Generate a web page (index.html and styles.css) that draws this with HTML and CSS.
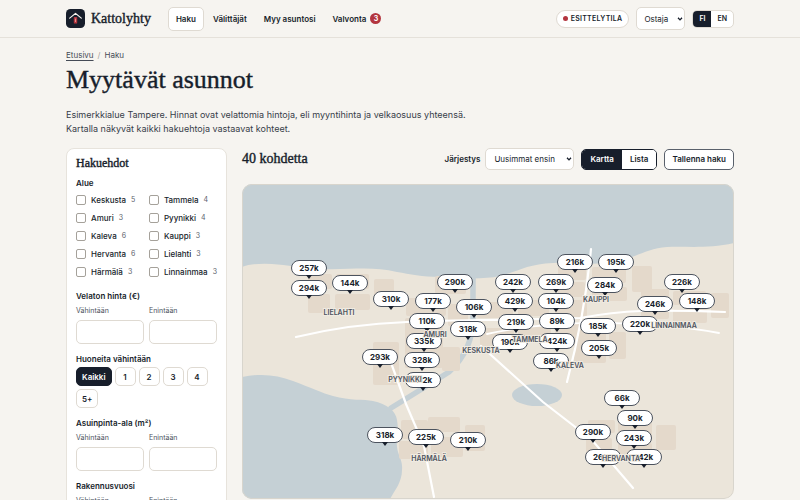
FILE: index.html
```html
<!DOCTYPE html>
<html lang="fi">
<head>
<meta charset="utf-8">
<meta name="viewport" content="width=device-width, initial-scale=1">
<title>Kattolyhty – Haku</title>
<link rel="stylesheet" href="styles.css">
</head>
<body>
<header class="topbar">
  <div class="wrap topbar-row">
    <a class="brand" href="#">
      <svg class="logo" viewBox="0 0 19 19" aria-hidden="true">
        <rect width="19" height="19" rx="4.5" fill="#171e2b"/>
        <path d="M3.7 9.1 9.5 4.4l5.8 4.7" fill="none" stroke="#f6f4f0" stroke-width="1.2" stroke-linecap="round" stroke-linejoin="round"/>
        <rect x="7.8" y="8.1" width="3.4" height="6.5" rx=".7" fill="#b3353f"/>
        <path d="M9.5 9.6v3.4" stroke="#e08d88" stroke-width="1"/>
      </svg>
      <span>Kattolyhty</span>
    </a>
    <nav class="nav">
      <a class="active" href="#">Haku</a>
      <a href="#">Välittäjät</a>
      <a href="#">Myy asuntosi</a>
      <a href="#">Valvonta <span class="count">3</span></a>
    </nav>
    <div class="tools">
      <span class="demo"><i></i>Esittelytila</span>
      <select class="select role" aria-label="Rooli"><option>Ostaja</option></select>
      <div class="langs"><button class="on" type="button">FI</button><button type="button">EN</button></div>
    </div>
  </div>
</header>
<main class="wrap">
  <nav class="crumbs"><a href="#">Etusivu</a><span class="sep">/</span><span>Haku</span></nav>
  <h1>Myytävät asunnot</h1>
  <p class="lead">Esimerkkialue Tampere. Hinnat ovat velattomia hintoja, eli myyntihinta ja velkaosuus yhteensä. Kartalla näkyvät kaikki hakuehtoja vastaavat kohteet.</p>
  <div class="layout">
    <form class="filters">
      <h2>Hakuehdot</h2>
      <fieldset>
        <legend>Alue</legend>
        <div class="areas">
          <label><input type="checkbox">Keskusta <small>5</small></label>
          <label><input type="checkbox">Tammela <small>4</small></label>
          <label><input type="checkbox">Amuri <small>3</small></label>
          <label><input type="checkbox">Pyynikki <small>4</small></label>
          <label><input type="checkbox">Kaleva <small>6</small></label>
          <label><input type="checkbox">Kauppi <small>3</small></label>
          <label><input type="checkbox">Hervanta <small>6</small></label>
          <label><input type="checkbox">Lielahti <small>3</small></label>
          <label><input type="checkbox">Härmälä <small>3</small></label>
          <label><input type="checkbox">Linnainmaa <small>3</small></label>
        </div>
      </fieldset>
      <fieldset>
        <legend>Velaton hinta (€)</legend>
        <div class="range">
          <label>Vähintään<input type="text" inputmode="numeric"></label>
          <label>Enintään<input type="text" inputmode="numeric"></label>
        </div>
      </fieldset>
      <fieldset>
        <legend>Huoneita vähintään</legend>
        <div class="chips">
          <button class="on" type="button">Kaikki</button>
          <button type="button">1</button>
          <button type="button">2</button>
          <button type="button">3</button>
          <button type="button">4</button>
          <button type="button">5+</button>
        </div>
      </fieldset>
      <fieldset>
        <legend>Asuinpinta-ala (m²)</legend>
        <div class="range">
          <label>Vähintään<input type="text" inputmode="numeric"></label>
          <label>Enintään<input type="text" inputmode="numeric"></label>
        </div>
      </fieldset>
      <fieldset>
        <legend>Rakennusvuosi</legend>
        <div class="range">
          <label>Vähintään<input type="text" inputmode="numeric"></label>
          <label>Enintään<input type="text" inputmode="numeric"></label>
        </div>
      </fieldset>
    </form>
    <section class="results">
      <div class="bar">
        <h2>40 kohdetta</h2>
        <div class="actions">
          <label class="sort">Järjestys
            <select class="select"><option>Uusimmat ensin</option></select>
          </label>
          <div class="views"><button class="on" type="button">Kartta</button><button type="button">Lista</button></div>
          <button class="save" type="button">Tallenna haku</button>
        </div>
      </div>
      <div class="map" id="map">
        <svg class="terrain" viewBox="0 0 492 315" aria-hidden="true">
          <rect width="492" height="315" fill="#ebe5da"/>
          <path fill="#c5d0d5" d="M0 0H492V59C465 65 445 62 425 63C400 65 388 78 365 79C345 81 330 78 311 79C285 80 275 88 258 92C240 96 215 94 198 93C180 93 168 90 155 88C130 82 110 86 78 85C60 84 45 81 30 80Q10 79 0 83Z"/>
          <path fill="#c5d0d5" d="M0 193C20 189 35 191 51 197C70 204 80 209 91 212C108 217 122 215 131 217C145 220 154 227 155 236C157 247 154 252 155 263C156 272 161 276 160 286C160 298 153 306 148 315H0Z"/>
          <path fill="none" stroke="#c5d0d5" stroke-width="5.500" stroke-linecap="round" d="M231 90V134Q231 166 207 188Q180 205 149 224"/>
          <ellipse cx="295" cy="211" rx="25" ry="11" fill="#c5d0d5"/>
          <g fill="#e4d9cb">
            <rect x="66" y="90" width="24" height="15" rx="2"/><rect x="94" y="90" width="33" height="15" rx="2"/><rect x="66" y="110" width="22" height="19" rx="2"/><rect x="93" y="110" width="35" height="16" rx="2"/><rect x="132" y="95" width="20" height="17" rx="2"/>
            <rect x="163" y="134" width="38" height="50" rx="2"/><rect x="131" y="158" width="26" height="43" rx="2"/><rect x="164" y="114" width="40" height="18" rx="2"/><rect x="200" y="163" width="18" height="24" rx="2"/><rect x="193" y="92" width="31" height="18" rx="2"/>
            <rect x="206" y="120" width="20" height="22" rx="2"/><rect x="235" y="118" width="36" height="16" rx="2"/><rect x="238" y="144" width="34" height="18" rx="2"/>
            <rect x="276" y="116" width="31" height="16" rx="2"/><rect x="276" y="143" width="33" height="16" rx="2"/><rect x="313" y="116" width="32" height="17" rx="2"/><rect x="313" y="140" width="26" height="17" rx="2"/>
            <rect x="316" y="82" width="28" height="14" rx="2"/><rect x="316" y="98" width="27" height="15" rx="2"/><rect x="350" y="83" width="34" height="16" rx="2"/><rect x="350" y="103" width="35" height="14" rx="2"/><rect x="390" y="82" width="20" height="26" rx="2"/>
            <rect x="332" y="140" width="32" height="39" rx="2"/><rect x="367" y="148" width="17" height="27" rx="2"/>
            <rect x="399" y="105" width="28" height="30" rx="2"/><rect x="431" y="107" width="33" height="14" rx="2"/><rect x="431" y="125" width="34" height="14" rx="2"/><rect x="469" y="109" width="18" height="25" rx="2"/>
            <rect x="159" y="236" width="27" height="19" rx="2"/><rect x="186" y="233" width="32" height="15" rx="2"/><rect x="157" y="257" width="29" height="18" rx="2"/><rect x="189" y="253" width="32" height="20" rx="2"/><rect x="223" y="241" width="20" height="26" rx="2"/>
            <rect x="346" y="236" width="27" height="13" rx="2"/><rect x="344" y="254" width="26" height="20" rx="2"/><rect x="376" y="238" width="34" height="18" rx="2"/><rect x="376" y="259" width="34" height="15" rx="2"/><rect x="414" y="241" width="20" height="25" rx="2"/>
          </g>
          <g fill="none" stroke="#fff" stroke-width="2.2" stroke-linecap="round">
            <path d="M54 153Q108 140 165 138T238 136T338 134Q370 128 400 127T483 128"/>
            <path stroke-width="1.800" d="M245 150Q300 138 365 139T477 149"/>
            <path d="M349 65Q343 130 325 198"/>
            <path d="M239 162 301 218 350 256 391 304"/>
            <path d="M148 176 164 220 182 262 192 313"/>
          </g>
        </svg>
      </div>
    </section>
  </div>
</main>
<script src="app.js"></script>
</body>
</html>
```
FILE: styles.css
```css
* { box-sizing: border-box; }
:root { --ink: #171e2b; --line: #dfdad2; --paper: #f6f4f0; --serif: "Liberation Serif", "Times New Roman", serif; }
body { margin: 0; background: var(--paper); color: var(--ink); font: 9px/14px Inter, sans-serif; }
button, input, select { font: inherit; color: inherit; margin: 0; }
button { cursor: pointer; }
h1, h2, p { margin: 0; }
h1, h2 { font-family: var(--serif); font-weight: 400; -webkit-text-stroke: 0.4px currentColor; }
.wrap { max-width: 700px; margin: 0 auto; padding: 0 16px; }

.topbar { border-bottom: 1px solid #e5e1da; }
.topbar-row { display: flex; align-items: center; height: 37px; }
.brand { display: flex; align-items: center; gap: 6px; font: 14px/20px var(--serif); color: inherit; text-decoration: none; -webkit-text-stroke: 0.4px currentColor; }
.logo { width: 19px; height: 19px; }
.nav { display: flex; margin-left: 17px; gap: 1px; }
.nav a { display: flex; align-items: center; gap: 4px; height: 24px; padding: 0 7px; border: 1px solid transparent; border-radius: 5px; color: inherit; text-decoration: none; font-size: 8px; font-weight: 600; }
.nav .active { background: #fff; border-color: var(--line); }
.count { width: 11px; height: 11px; border-radius: 50%; background: #b3353f; color: #fff; font: 700 7px/11px Inter, sans-serif; text-align: center; }
.tools { display: flex; align-items: center; gap: 7px; margin-left: auto; }
.demo { display: flex; align-items: center; gap: 3px; height: 18px; padding: 0 6px; border: 1px solid var(--line); border-radius: 9px; background: #fff; font-size: 7px; font-weight: 600; letter-spacing: 0.04em; text-transform: uppercase; }
.demo i { width: 5px; height: 5px; border-radius: 50%; background: #b3353f; }
.select { appearance: none; height: 22px; padding: 0 12px 0 8px; border: 1px solid var(--line); border-radius: 5px; background: #fff url("data:image/svg+xml,%3Csvg xmlns='http://www.w3.org/2000/svg' viewBox='0 0 6 4'%3E%3Cpath d='M1 .8 3 2.900 5 .8' fill='none' stroke='%23171e2b' stroke-width='1.3'/%3E%3C/svg%3E") no-repeat right 1px center / 6px 4px; font-size: 8px; }
.role { width: 49px; height: 23px; padding-left: 7px; }
.langs { display: flex; height: 18px; border: 1px solid var(--line); border-radius: 5px; overflow: hidden; background: #fff; }
.langs button { border: 0; padding: 0 6px; background: none; font-size: 7px; font-weight: 600; }
.langs .on, .views .on { background: var(--ink); color: #fff; }

.crumbs { display: flex; gap: 4px; padding-top: 10px; font-size: 8px; color: #454b56; }
.crumbs a { color: inherit; text-underline-offset: 2px; }
.sep { color: #a7a49e; }
h1 { font-size: 26px; line-height: 34px; margin-top: 1px; }
.lead { max-width: 410px; margin-top: 11px; color: #363d49; }
.layout { display: grid; grid-template-columns: 161px 1fr; gap: 15px; align-items: start; margin-top: 12px; }

.filters { padding: 5px 9px 16px; border: 1px solid #e7e3dc; border-radius: 8px; background: #fff; }
.filters h2 { font-size: 12px; line-height: 18px; margin-bottom: 4px; }
fieldset { margin: 0 0 8px; padding: 0; border: 0; min-width: 0; }
legend { padding: 0; margin-bottom: 1px; font-size: 8px; line-height: 14px; font-weight: 600; }
.areas { display: grid; grid-template-columns: 1fr 1fr; column-gap: 5px; }
.areas label { display: flex; align-items: center; height: 18px; white-space: nowrap; font-size: 8px; font-weight: 500; }
.areas small { margin-left: 5px; font-size: 7px; font-weight: 400; color: #5c626c; }
.areas input { appearance: none; flex: none; width: 10px; height: 10px; margin-right: 5px; border: 1px solid #a5a19a; border-radius: 2px; background: #fff; }
.range { display: grid; grid-template-columns: 1fr 1fr; gap: 5px; padding-top: 2px; }
.range label { font-size: 7px; line-height: 10px; color: #4c525d; }
.range input { display: block; width: 100%; height: 24px; margin-top: 4px; border: 1px solid var(--line); border-radius: 5px; background: #fff; }
.chips { display: flex; flex-wrap: wrap; gap: 3px; }
.chips button { height: 19px; min-width: 21px; padding: 0 5px; border: 1px solid var(--line); border-radius: 5px; background: #fff; font-size: 8px; font-weight: 600; }
.chips .on { background: var(--ink); border-color: var(--ink); color: #fff; }

.bar { display: flex; align-items: center; justify-content: space-between; height: 22px; margin-bottom: 14px; }
.bar h2 { font-size: 14px; line-height: 18px; }
.actions { display: flex; align-items: center; gap: 7px; }
.sort { display: flex; align-items: center; gap: 5px; font-size: 8px; font-weight: 600; }
.sort select { width: 89px; font-weight: 400; }
.views { display: flex; height: 21px; border: 1px solid var(--ink); border-radius: 5px; overflow: hidden; background: #fff; }
.views button, .save { border: 0; padding: 0 7px; background: #fff; font-size: 8px; font-weight: 600; }
.views button { padding: 0 8px; }
.save { height: 21px; border: 1px solid #59606b; border-radius: 5px; }

.map { position: relative; border-radius: 10px; overflow: hidden; }
.map::after { content: ""; position: absolute; inset: 0; border: 1px solid #d8d5cd; border-radius: 10px; pointer-events: none; }
.terrain { display: block; width: 100%; }
.pin, .place { position: absolute; transform: translate(-50%, -50%); white-space: nowrap; }
.pin { width: 36px; height: 16px; padding: 0; border: 1px solid #4c535e; border-radius: 8px; background: #fff; font-size: 8px; line-height: 14px; font-weight: 700; text-align: center; }
.pin::after { content: ""; position: absolute; left: 50%; top: 100%; margin-left: -3px; border: 3px solid transparent; border-top: 4px solid var(--ink); border-bottom: 0; }
.place { font-size: 7px; line-height: 8px; font-weight: 600; color: #4c525d; text-transform: uppercase; -webkit-text-stroke: 2px #f0ebe2; paint-order: stroke fill; pointer-events: none; }
```
FILE: app.js
```js
const WIDTH = 492;
const HEIGHT = 315;

// Price pins: x, y, label
const pins = [
  [67, 84, "257k"], [67, 104, "294k"], [108, 99, "144k"], [149, 115, "310k"],
  [213, 98, "290k"], [191, 117, "177k"], [232, 123, "106k"], [185, 137, "110k"],
  [226, 145, "318k"], [182, 157, "335k"], [138, 173, "293k"], [180, 176, "328k"],
  [181, 196, "212k"], [333, 78, "216k"], [374, 78, "195k"], [271, 98, "242k"],
  [314, 98, "269k"], [363, 101, "284k"], [440, 98, "226k"], [273, 117, "429k"],
  [314, 117, "104k"], [413, 120, "246k"], [455, 117, "148k"], [274, 138, "219k"],
  [315, 137, "89k"], [356, 142, "185k"], [398, 140, "220k"], [268, 158, "190k"],
  [315, 157, "424k"], [357, 164, "205k"], [309, 177, "86k"], [143, 251, "318k"],
  [184, 253, "225k"], [226, 256, "210k"], [380, 214, "66k"], [393, 234, "90k"],
  [351, 248, "290k"], [392, 254, "243k"], [361, 273, "262k"], [402, 273, "142k"]
];

// District names: x, y, label
const places = [
  [97, 129, "Lielahti"], [193, 151, "Amuri"], [239, 167, "Keskusta"],
  [163, 196, "Pyynikki"], [288, 156, "Tammela"], [354, 116, "Kauppi"],
  [328, 182, "Kaleva"], [432, 142, "Linnainmaa"], [187, 275, "Härmälä"],
  [379, 275, "Hervanta"]
];

const map = document.getElementById("map");

function add(tag, className, [x, y, label]) {
  const el = document.createElement(tag);
  el.className = className;
  el.textContent = label;
  el.style.left = (x / WIDTH) * 100 + "%";
  el.style.top = (y / HEIGHT) * 100 + "%";
  map.append(el);
}

pins.forEach((p) => add("button", "pin", p));
places.forEach((p) => add("span", "place", p));
```
